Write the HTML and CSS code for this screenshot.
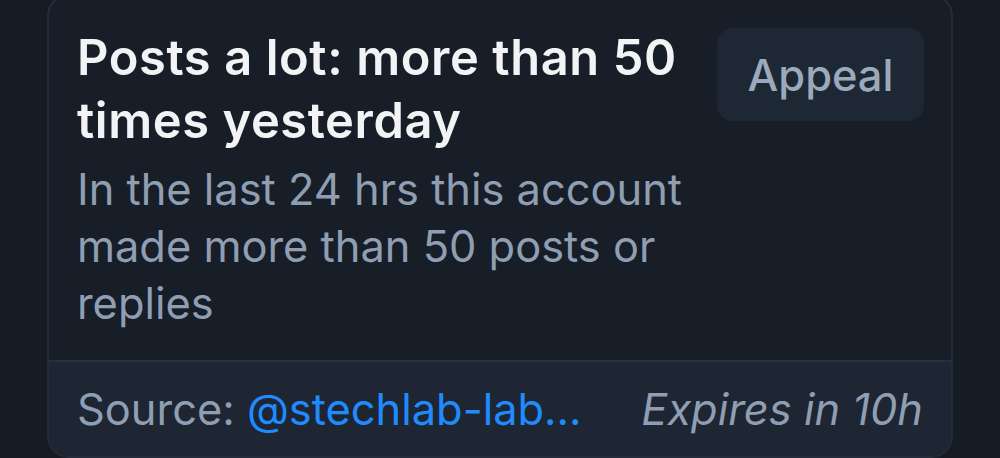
FILE: index.html
```html
<!DOCTYPE html>
<html>
<head>
<meta charset="utf-8">
<link rel="stylesheet" href="styles.css">
</head>
<body>
<div class="card">
  <div class="main">
    <div class="text">
      <div class="title">Posts a lot: more than 50 times yesterday</div>
      <div class="desc">In the last 24 hrs this account made more than 50 posts or replies</div>
    </div>
    <button class="appeal">Appeal</button>
  </div>
  <div class="footer">
    <div class="source">Source: <span class="handle">@stechlab-lab…</span></div>
    <div class="expires">Expires in 10h</div>
  </div>
</div>
</body>
</html>
```
FILE: styles.css
```css
html, body {
  margin: 0;
  padding: 0;
  background: #161c24;
  height: 458px;
  overflow: hidden;
  font-family: Inter, "Noto Sans", sans-serif;
}
.card {
  margin: -6px 0 0 47px;
  width: 906px;
  box-sizing: border-box;
  border: 2px solid #232c38;
  border-radius: 22px;
  background: #171e28;
  overflow: hidden;
}
.main {
  display: flex;
  align-items: flex-start;
  padding: 30px 27px 28px 28px;
  gap: 30px;
}
.text {
  flex: 1;
  min-width: 0;
}
.title {
  color: #f1f3f5;
  font-weight: 600;
  font-size: 48.8px;
  line-height: 63px;
  letter-spacing: 0.6px;
}
.desc {
  margin-top: 9px;
  color: #8f9eb2;
  font-size: 43.4px;
  line-height: 57px;
}
.appeal {
  flex: none;
  margin-top: 2px;
  margin-left: -2px;
  width: 207px;
  height: 93px;
  border: none;
  border-radius: 16px;
  background: #1e2834;
  color: #9aa9bc;
  font-family: inherit;
  font-size: 43.4px;
  font-weight: 500;
  padding: 0;
}
.footer {
  display: flex;
  justify-content: space-between;
  align-items: center;
  height: 94px;
  border-top: 2px solid #263140;
  background: #1d2632;
  padding: 0 28px;
  font-size: 43.4px;
  color: #8f9eb2;
}
.handle {
  color: #208bfe;
}
.expires {
  font-style: italic;
}
```
